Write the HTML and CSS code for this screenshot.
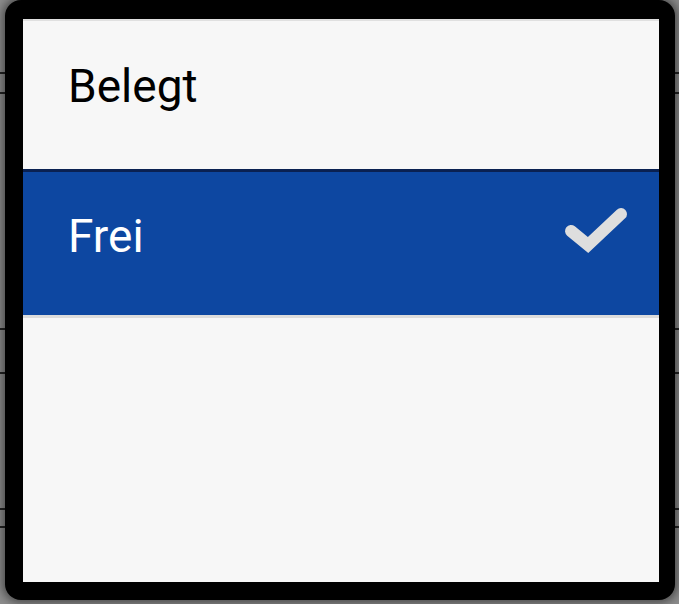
FILE: index.html
```html
<!DOCTYPE html>
<html lang="de">
<head>
<meta charset="UTF-8">
<meta name="viewport" content="width=device-width, initial-scale=1.0"/>
<title>Status</title>
<link rel="stylesheet" href="styles.css">
</head>
<body>
<div class="backdrop">
    <div class="rule r1"></div>
    <div class="rule r2"></div>
    <div class="rule r3"></div>
    <div class="rule r4"></div>
    <div class="rule r5"></div>
    <div class="rule r6"></div>
</div>
<div class="frame">
    <ul class="options">
        <li class="option">Belegt</li>
        <li class="option selected">
            <span>Frei</span>
            <svg class="check" width="70" height="56" viewBox="0 0 70 56">
                <path d="M9 26 L26 40 L59 9" fill="none" stroke="#dedede" stroke-width="12" stroke-linecap="round" stroke-linejoin="miter"/>
            </svg>
        </li>
    </ul>
</div>
</body>
</html>
```

FILE: styles.css
```css
* { margin:0; padding:0; box-sizing:border-box; }
body {
    font-family: Roboto, 'Noto Sans', sans-serif;
    background: #8c8c8c;
    width: 679px;
    height: 604px;
    overflow: hidden;
    position: relative;
}
.backdrop {
    position: absolute;
    inset: 0;
    pointer-events: none;
}
.rule {
    position: absolute;
    left: 0; right: 0;
    height: 2px;
    background: #222;
}
.r1 { top: 72px; }
.r2 { top: 92px; }
.r3 { top: 328px; }
.r4 { top: 372px; }
.r5 { top: 508px; }
.r6 { top: 526px; }
.frame {
    position: relative;
    margin-left: 5px;
    width: 670px;
    height: 600px;
    background: #000;
    border-radius: 16px;
    padding: 19px 16px 18px 18px;
    box-shadow: 0 0 8px 3px rgba(0,0,0,0.45);
}
.options {
    list-style: none;
    height: 100%;
    background: #f7f7f7;
    border-top: 2px solid #e0e0e0;
}
.option {
    height: 148px;
    padding: 42px 32px 0 45px;
    font-size: 46px;
    line-height: 46px;
    color: #000;
    display: flex;
    justify-content: space-between;
    align-items: flex-start;
}
.option.selected {
    height: 149px;
    background: #0d47a1;
    color: #fff;
    border-top: 3px solid #0a2152;
    border-bottom: 3px solid #dcdcdc;
    padding-top: 41px;
}
.check {
    margin-top: -8px;
    margin-right: -5px;
}
```
